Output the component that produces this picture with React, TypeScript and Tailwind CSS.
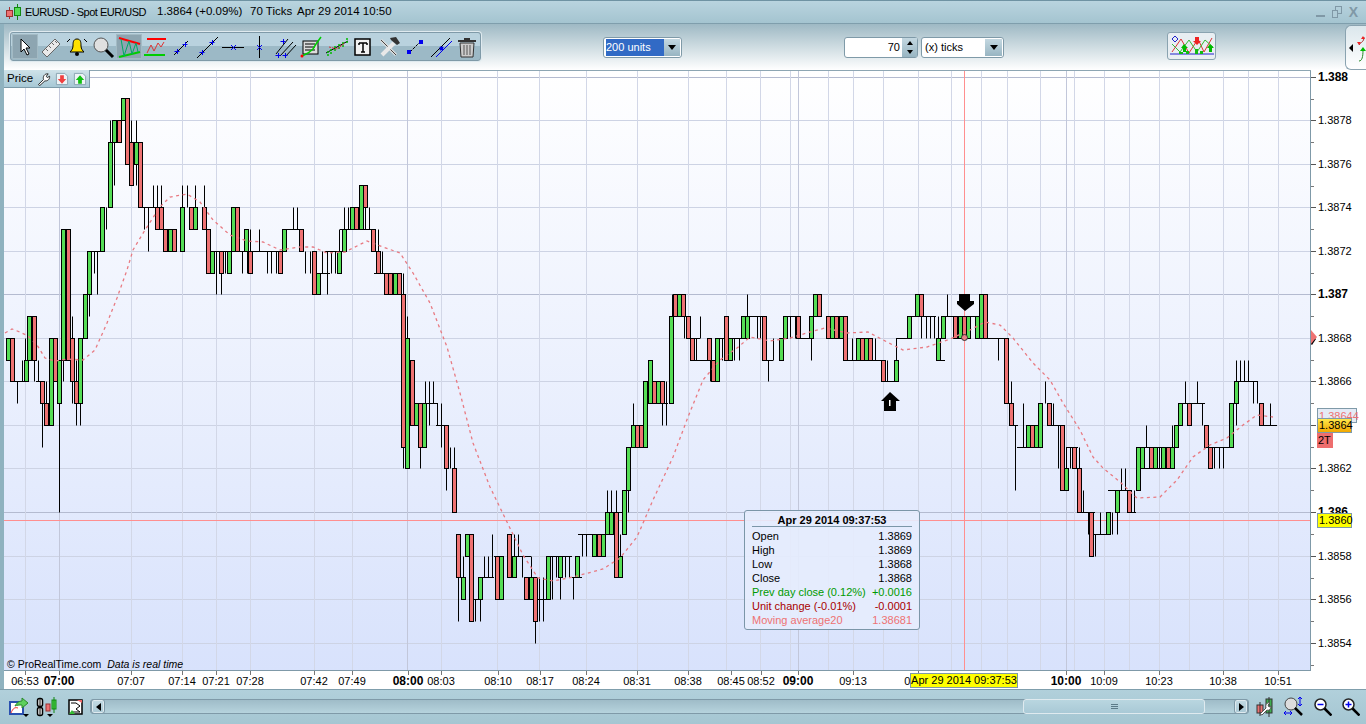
import React from 'react';

// price level (1.38xx) to page y
const ly = (n: number) => Math.round(512 - (n - 60) * 21.77) + 0.5;

type Body = [number, number, number, 'g' | 'r'];

const bodies: Body[] = [
  [8, 68, 67, 'g'], [12, 68, 66, 'r'], [26, 67, 66, 'g'], [29, 69, 67, 'g'], [34, 69, 67, 'r'], [42, 66, 65, 'r'], [46, 65, 64, 'r'],
  [51, 68, 64, 'g'], [55, 68, 66, 'r'], [59, 67, 65, 'g'], [63, 73, 67, 'g'], [68, 73, 67, 'r'], [72, 68, 66, 'r'], [76, 66, 65, 'r'],
  [80, 68, 65, 'g'], [85, 70, 68, 'g'], [89, 72, 70, 'g'], [102, 74, 72, 'g'], [110, 77, 74, 'g'], [114, 78, 77, 'g'], [119, 78, 77, 'r'],
  [123, 79, 78, 'g'], [127, 79, 76, 'r'], [131, 77, 75, 'r'], [136, 77, 76, 'g'], [140, 77, 74, 'r'], [157, 74, 73, 'r'], [161, 74, 73, 'r'],
  [165, 73, 72, 'r'], [170, 73, 72, 'g'], [174, 73, 72, 'r'], [182, 74, 72, 'g'], [191, 74, 73, 'r'], [195, 74, 73, 'g'], [204, 74, 73, 'r'],
  [208, 73, 71, 'r'], [212, 72, 71, 'g'], [221, 72, 71, 'r'], [229, 72, 71, 'g'], [233, 74, 72, 'g'], [237, 74, 72, 'r'], [246, 73, 72, 'g'],
  [250, 72, 71, 'r'], [280, 72, 71, 'r'], [284, 73, 72, 'g'], [301, 73, 72, 'r'], [314, 72, 70, 'r'], [318, 71, 70, 'g'], [339, 72, 71, 'g'],
  [344, 73, 72, 'g'], [352, 74, 73, 'g'], [356, 74, 73, 'r'], [361, 75, 73, 'g'], [365, 75, 74, 'r'], [373, 73, 72, 'r'], [378, 72, 71, 'r'],
  [386, 71, 70, 'r'], [390, 71, 70, 'r'], [395, 71, 70, 'g'], [399, 71, 70, 'r'], [403, 70, 63, 'r'], [407, 68, 62, 'g'], [412, 67, 64, 'r'],
  [416, 65, 64, 'g'], [420, 65, 63, 'r'], [424, 65, 63, 'g'], [446, 64, 62, 'r'], [454, 62, 60, 'r'],
  [458, 59, 57, 'r'], [463, 57, 56, 'g'], [467, 59, 58, 'g'], [471, 59, 55, 'r'], [480, 57, 56, 'g'], [497, 58, 56, 'r'], [501, 58, 56, 'g'],
  [509, 59, 57, 'r'], [514, 58, 57, 'g'], [526, 57, 56, 'r'], [531, 57, 56, 'g'], [535, 57, 55, 'r'], [548, 58, 56, 'g'], [560, 58, 57, 'g'],
  [577, 58, 57, 'g'], [594, 59, 58, 'g'], [599, 59, 58, 'r'], [603, 59, 58, 'g'], [607, 60, 59, 'g'], [611, 60, 59, 'g'], [616, 60, 57, 'r'],
  [620, 58, 57, 'g'], [624, 61, 59, 'g'], [628, 63, 61, 'g'], [633, 64, 63, 'g'], [637, 64, 63, 'r'], [641, 64, 63, 'r'], [645, 66, 63, 'g'],
  [650, 67, 65, 'g'], [654, 66, 65, 'r'], [658, 66, 65, 'g'], [662, 66, 65, 'r'], [671, 69, 65, 'g'], [675, 70, 69, 'r'], [679, 70, 69, 'g'],
  [683, 70, 69, 'r'], [688, 69, 68, 'r'], [692, 68, 67, 'r'], [709, 68, 67, 'r'], [713, 67, 66, 'r'], [717, 68, 66, 'g'], [726, 69, 67, 'r'],
  [730, 68, 67, 'g'], [743, 69, 68, 'g'], [747, 69, 68, 'g'], [764, 69, 67, 'r'], [781, 68, 67, 'g'], [785, 69, 68, 'g'], [798, 69, 68, 'r'],
  [811, 69, 68, 'g'], [815, 70, 69, 'g'], [819, 70, 69, 'r'], [828, 69, 68, 'r'], [832, 69, 68, 'g'], [836, 69, 68, 'r'], [841, 69, 68, 'g'],
  [845, 69, 67, 'r'], [858, 68, 67, 'g'], [862, 68, 67, 'r'], [866, 68, 67, 'g'], [870, 68, 67, 'r'], [883, 67, 66, 'r'], [896, 67, 66, 'g'],
  [909, 69, 68, 'g'], [917, 70, 69, 'g'], [921, 70, 69, 'r'], [938, 68, 67, 'g'], [943, 69, 68, 'g'], [955, 69, 68, 'r'], [960, 69, 68, 'g'],
  [964, 69, 68, 'r'], [968, 69, 68, 'g'], [977, 69, 68, 'g'], [981, 70, 68, 'g'], [985, 70, 68, 'r'],
  [1006, 68, 65, 'r'], [1011, 65, 64, 'r'], [1028, 64, 63, 'g'], [1032, 64, 63, 'r'], [1036, 64, 63, 'g'], [1040, 65, 63, 'g'], [1049, 65, 64, 'r'],
  [1062, 64, 61, 'r'], [1066, 62, 61, 'g'], [1074, 63, 62, 'r'], [1079, 62, 60, 'r'], [1091, 60, 58, 'r'], [1108, 60, 59, 'g'], [1117, 61, 60, 'g'],
  [1129, 61, 60, 'r'], [1138, 63, 61, 'g'], [1142, 63, 62, 'g'], [1151, 63, 62, 'r'], [1155, 63, 62, 'g'], [1163, 63, 62, 'g'], [1168, 63, 62, 'r'],
  [1172, 63, 62, 'g'], [1176, 64, 63, 'g'], [1180, 65, 64, 'g'], [1189, 65, 64, 'r'], [1206, 64, 63, 'r'], [1210, 63, 62, 'r'], [1231, 65, 63, 'g'],
  [1236, 66, 65, 'g'], [1261, 65, 64, 'r'],
];

const wicks: [number, number, number][] = [
  [17, 66, 65], [22, 67, 66], [25, 68, 67], [34, 67, 66], [38, 67, 66], [42, 65, 63], [46, 66, 65], [59, 65, 60], [63, 67, 66], [72, 69, 68], [72, 66, 65],
  [76, 67, 66], [76, 65, 64], [80, 65, 64], [89, 70, 69], [94, 72, 71], [97, 72, 70], [106, 74, 73], [110, 78, 77], [114, 77, 75], [131, 77, 78], [136, 78, 77],
  [136, 76, 75], [144, 74, 73], [148, 74, 72], [153, 75, 74], [157, 75, 74], [161, 75, 74], [182, 75, 74], [187, 75, 74], [195, 75, 74], [204, 75, 74],
  [216, 72, 70], [221, 71, 70], [225, 72, 71], [242, 72, 71], [247, 72, 71], [250, 73, 72], [259, 73, 72], [267, 72, 71], [271, 72, 71], [276, 72, 71],
  [293, 74, 73], [297, 74, 73], [305, 72, 71], [310, 72, 71], [322, 72, 71], [327, 72, 70], [331, 72, 71], [335, 72, 71], [339, 73, 72], [344, 74, 73],
  [348, 74, 73], [365, 74, 73], [369, 74, 73], [378, 73, 72], [382, 72, 71], [403, 71, 70], [403, 63, 62], [407, 69, 68], [416, 65, 64], [420, 63, 62],
  [425, 66, 65], [429, 66, 64], [433, 66, 65], [437, 65, 64], [441, 65, 63], [446, 62, 61], [450, 63, 62], [454, 63, 62],
  [458, 57, 55], [463, 58, 57], [475, 56, 55], [480, 56, 55], [484, 58, 57], [488, 58, 57], [492, 59, 57], [514, 59, 58], [518, 59, 58], [522, 58, 57],
  [531, 58, 57], [535, 55, 54], [539, 57, 55], [543, 57, 55], [552, 58, 56], [556, 58, 57], [560, 57, 56], [565, 58, 57], [569, 58, 57], [573, 57, 56],
  [582, 59, 58], [586, 59, 58], [607, 60, 61], [611, 61, 60], [616, 61, 60], [620, 59, 58], [628, 61, 60], [633, 65, 64], [662, 65, 64], [666, 66, 64],
  [672, 70, 69], [684, 69, 68], [696, 68, 67], [700, 69, 68], [710, 67, 66], [722, 68, 67], [734, 68, 67], [739, 68, 67], [747, 70, 69], [757, 69, 68],
  [760, 69, 68], [768, 67, 66], [773, 68, 67], [790, 69, 68], [795, 69, 68], [811, 68, 67], [852, 68, 67], [875, 68, 67], [887, 67, 66], [896, 68, 67],
  [921, 69, 68], [926, 69, 68], [930, 69, 68], [934, 69, 68], [938, 69, 68], [947, 70, 69], [998, 68, 67], [1011, 66, 65], [1015, 64, 61],
  [1023, 65, 63], [1040, 64, 63], [1045, 66, 65], [1053, 65, 64], [1058, 64, 62], [1066, 63, 62], [1070, 63, 62], [1079, 63, 62], [1083, 61, 60], [1088, 60, 59],
  [1095, 59, 58], [1100, 60, 59], [1112, 60, 59], [1117, 60, 59], [1121, 62, 61], [1125, 62, 61], [1134, 61, 60], [1146, 64, 63], [1159, 63, 62], [1172, 64, 63],
  [1185, 66, 65], [1197, 66, 65], [1202, 65, 64], [1214, 63, 62], [1219, 63, 62], [1223, 63, 62], [1236, 67, 66], [1236, 65, 64], [1240, 67, 66], [1244, 67, 66],
  [1248, 67, 66], [1253, 66, 65], [1257, 66, 65], [1270, 65, 64],
];

const dojis: [number, number, number][] = [
  [10, 28, 66], [36, 44, 66], [89, 100, 72], [140, 163, 74], [212, 232, 72], [238, 284, 72], [284, 303, 73], [318, 330, 71], [325, 344, 72], [340, 366, 73],
  [365, 375, 73], [374, 388, 71], [416, 438, 65], [436, 447, 64], [471, 482, 56], [481, 494, 57], [494, 501, 58], [509, 531, 58], [536, 548, 56], [548, 572, 58],
  [572, 582, 57], [578, 595, 59], [616, 622, 60], [660, 668, 65], [688, 700, 68], [692, 712, 67], [717, 744, 68], [743, 765, 69], [764, 773, 67], [785, 800, 69],
  [798, 812, 68], [845, 886, 67], [883, 898, 66], [896, 909, 68], [909, 936, 69], [936, 945, 67], [943, 985, 69], [985, 1006, 68], [1011, 1018, 64], [1017, 1040, 63],
  [1049, 1064, 64], [1066, 1078, 63], [1079, 1095, 60], [1091, 1108, 59], [1108, 1130, 61], [1129, 1136, 60], [1142, 1178, 63], [1138, 1172, 62], [1180, 1205, 65],
  [1206, 1232, 63], [1236, 1258, 66], [1261, 1277, 64],
];

const ma: [number, number][] = [
  [5, 333], [12, 329], [20, 332], [28, 336], [37, 345], [45, 358], [55, 361], [67, 359], [83, 360], [95, 350], [107, 323], [117, 298], [127, 270], [133, 250],
  [145, 230], [160, 207], [170, 197], [187, 194], [200, 202], [213, 220], [230, 235], [247, 241], [263, 242], [280, 250], [300, 247], [313, 247], [327, 253],
  [345, 252], [367, 241], [383, 247], [400, 253], [413, 273], [430, 303], [447, 347], [460, 393], [473, 443], [490, 487], [507, 522], [523, 555], [538, 578],
  [553, 581], [573, 577], [603, 569], [620, 558], [637, 537], [653, 500], [673, 457], [688, 417], [703, 380], [720, 360], [737, 348], [750, 337], [770, 341],
  [790, 338], [810, 332], [825, 328], [847, 333], [868, 332], [887, 342], [903, 350], [927, 347], [950, 339], [970, 330], [985, 322], [1000, 325], [1013, 338],
  [1033, 363], [1050, 380], [1063, 403], [1080, 430], [1093, 457], [1103, 468], [1120, 482], [1137, 498], [1160, 497], [1177, 480], [1193, 457], [1210, 445],
  [1227, 438], [1243, 425], [1257, 415], [1273, 417],
];

const minorX = [25, 131, 182, 216, 250, 314, 352, 441, 497, 539, 586, 637, 688, 726, 760, 790, 828, 853, 883, 918, 951, 981, 1007, 1040, 1074, 1104, 1129, 1159, 1189, 1223, 1248, 1278];
const majorX = [59, 407, 798, 1066];

const timeLabels: [number, string, boolean][] = [
  [25, '06:53', false], [59, '07:00', true], [131, '07:07', false], [182, '07:14', false], [216, '07:21', false], [250, '07:28', false], [314, '07:42', false],
  [352, '07:49', false], [408, '08:00', true], [441, '08:03', false], [498, '08:10', false], [540, '08:17', false], [586, '08:24', false], [637, '08:31', false],
  [688, '08:38', false], [731, '08:45', false], [761, '08:52', false], [798, '09:00', true], [853, '09:13', false], [918, '09:30', false], [1066, '10:00', true],
  [1104, '10:09', false], [1159, '10:23', false], [1223, '10:38', false], [1278, '10:51', false],
];

const priceLabels: [number, string, boolean][] = [
  [80, '1.388', true], [78, '1.3878', false], [76, '1.3876', false], [74, '1.3874', false], [72, '1.3872', false], [70, '1.387', true], [68, '1.3868', false],
  [66, '1.3866', false], [64, '1.3864', false], [62, '1.3862', false], [60, '1.386', true], [58, '1.3858', false], [56, '1.3856', false], [54, '1.3854', false],
];

function Chart() {
  return (
    <svg width="1366" height="619" viewBox="0 70 1366 619" className="block" fontFamily="'Liberation Sans', sans-serif">
      <defs>
        <linearGradient id="plotBg" x1="0" y1="0" x2="0" y2="1">
          <stop offset="0" stopColor="#ffffff" />
          <stop offset="1" stopColor="#d8e2fc" />
        </linearGradient>
      </defs>
      <rect x="4" y="70" width="1362" height="619" fill="#ffffff" />
      <rect x="4" y="70" width="1306" height="600" fill="url(#plotBg)" />
      {priceLabels.map(([n, , bold]) => (
        <line key={n} x1="4" x2="1310" y1={ly(n)} y2={ly(n)} stroke={bold ? '#b4bbd0' : '#cdd3e4'} strokeWidth="1" />
      ))}
      {minorX.map((x) => (
        <line key={x} x1={x + 0.5} x2={x + 0.5} y1="70" y2="670" stroke="#d2d7e7" />
      ))}
      {majorX.map((x) => (
        <line key={x} x1={x + 0.5} x2={x + 0.5} y1="70" y2="670" stroke="#c2c7da" />
      ))}
      <line x1="4" x2="1310" y1="520.5" y2="520.5" stroke="#ff8f8f" />
      <line x1="964.5" x2="964.5" y1="70" y2="670" stroke="#ff8f8f" />

      {dojis.map(([a, b, n], i) => (
        <line key={i} x1={a} x2={b} y1={ly(n)} y2={ly(n)} stroke="#000" />
      ))}
      {wicks.map(([x, a, b], i) => (
        <line key={i} x1={x + 0.5} x2={x + 0.5} y1={ly(a)} y2={ly(b)} stroke="#000" />
      ))}
      {bodies.map(([x, a, b, c], i) => (
        <rect key={i} x={x - 1.5} y={ly(a)} width="4" height={ly(b) - ly(a)} fill={c === 'g' ? '#55dd55' : '#ee7272'} stroke="#000" />
      ))}
      <polyline points={ma.map((p) => p.join(',')).join(' ')} fill="none" stroke="#e87a82" strokeWidth="1.3" strokeDasharray="3 3.5" />

      {/* buy / sell arrows */}
      <path d="M890 392l10 9h-4v10h-12v-10h-3z" fill="#000" />
      <rect x="889" y="400" width="1.5" height="6" fill="#fff" />
      <path d="M965 311l9-7v-3h-4v-7h-11v7h-2v3z" fill="#000" />
      <circle cx="964.5" cy="337.5" r="3" fill="#e98086" stroke="#333" />

      {/* frame and axes */}
      <line x1="1310.5" x2="1310.5" y1="70" y2="671" stroke="#7f99a8" strokeWidth="1" />
      <line x1="4" x2="1311" y1="670.5" y2="670.5" stroke="#7f99a8" />
      <line x1="4" x2="1311" y1="70.5" y2="70.5" stroke="#8da6b3" />
      {priceLabels.map(([n, text, bold]) => {
        const y = ly(n);
        return (
          <g key={text}>
            <line x1="1311" x2="1316" y1={y} y2={y} stroke="#555" />
            <line x1="1311" x2="1314" y1={y + 22} y2={y + 22} stroke="#777" />
            <text x="1318" y={y + 3.5} fontSize={bold ? 12 : 11} fontWeight={bold ? 700 : 400} fill="#000">{text}</text>
          </g>
        );
      })}
      <path d="M1311 330l6 7-6 8z" fill="#ee7272" />
      <path d="M1311 344l4-5h1l-4 6z" fill="#000" />
      {timeLabels.map(([x, text, bold]) => (
        <g key={text}>
          <line x1={x + 0.5} x2={x + 0.5} y1="671" y2="675" stroke="#777" />
          <text x={x} y="685" textAnchor="middle" fontSize={bold ? 12 : 11} fontWeight={bold ? 700 : 400} fill="#000">{text}</text>
        </g>
      ))}
    </svg>
  );
}

function Cross({ x, y }: { x: number; y: number }) {
  return <path d={`M${x - 2.5} ${y + 0.5}h5M${x + 0.5} ${y - 2}v5`} stroke="#0000ee" strokeWidth="1" fill="none" />;
}

function Tool({ active, children }: { active?: boolean; children: React.ReactNode }) {
  return (
    <div className={`w-[26px] h-[25px] flex items-center justify-center ${active ? 'bg-[#8da5b1] border border-[#a3bac4]' : ''}`}>
      <svg width="24" height="24" viewBox="0 0 24 24" fill="none">{children}</svg>
    </div>
  );
}

function Toolbar() {
  return (
    <div className="ml-[10px] mt-[8px] h-[29px] w-[471px] pl-[1px] flex items-center rounded-[3px] border border-[#7f9aa8] bg-[linear-gradient(#b9d2de_0,#b9d2de_50%,#9cb9c6_50%,#9cb9c6_100%)] shadow-[0_0_0_1px_#dfeaef]">
      <Tool active><path d="M8 4l0 13 3-3 3 6 2-1-3-6 4 0z" fill="#fff" stroke="#000" /></Tool>
      <Tool>
        <path d="M3 17L16 4l5 5L8 22z" fill="#e9e9e9" stroke="#666" />
        <path d="M7 14l2 2M10 11l2 2M13 8l2 2M16 6l2 2" stroke="#666" />
      </Tool>
      <Tool>
        <path d="M12 4c-4 0-4 4-4 7s-2 5-3 6h14c-1-1-3-3-3-6s0-7-4-7z" fill="#ffe100" stroke="#000" />
        <circle cx="12" cy="19" r="2" fill="#000" />
        <path d="M5 4L2 7M19 4l3 3" stroke="#000" />
      </Tool>
      <Tool>
        <circle cx="10" cy="10" r="7" fill="#e0e0e0" stroke="#555" />
        <path d="M15 15l7 7" stroke="#000" strokeWidth="3" />
      </Tool>
      <Tool active>
        <path d="M2 3l21 6" stroke="#f00" strokeWidth="2" />
        <path d="M2 22l21-5" stroke="#0c0" strokeWidth="2" />
        <path d="M4 4l3 17M7 21l5-15M12 6l3 13M15 19l4-11M19 8l2 9" stroke="#0a6" />
      </Tool>
      <Tool>
        <path d="M4 4h19" stroke="#f00" strokeWidth="2" />
        <path d="M1 20h21" stroke="#0c0" strokeWidth="2" />
        <path d="M4 18l4-8 3 6 4-8 3 4 3-5" stroke="#d33" />
      </Tool>
      <Tool>
        <path d="M5 20L19 6" stroke="#000" />
        <Cross x={8} y={16} /><Cross x={16} y={9} />
      </Tool>
      <Tool>
        <path d="M2 23L23 2" stroke="#000" />
        <Cross x={7} y={17} /><Cross x={17} y={7} />
      </Tool>
      <Tool>
        <path d="M1 12.5h22" stroke="#000" />
        <path d="M10 10l5 5M15 10l-5 5" stroke="#00e" />
      </Tool>
      <Tool>
        <path d="M12.5 1v22" stroke="#000" />
        <path d="M10 10l5 5M15 10l-5 5" stroke="#00e" />
      </Tool>
      <Tool>
        <path d="M3 19L15 4M7 21L20 7M12 22L23 10" stroke="#000" />
        <Cross x={5} y={20} /><Cross x={12} y={20} /><Cross x={10} y={6} />
      </Tool>
      <Tool>
        <rect x="4" y="6" width="15" height="13" fill="#dcdcdc" stroke="#000" />
        <path d="M6 9h10M6 12h10M6 15h10" stroke="#000" />
        <path d="M3 21l6-3 5-4 3-5 5-7" stroke="#0c0" strokeWidth="1.5" />
        <circle cx="3" cy="21" r="1.5" fill="#f00" />
      </Tool>
      <Tool>
        <path d="M1 18L23 6" stroke="#000" />
        <path d="M3 21v-6M6 19v-6M10 16v-6M14 14V8M18 12V6M22 8V2" stroke="#0b0" strokeDasharray="2 1" strokeWidth="1.5" />
        <path d="M4 12l8 2 8-6" stroke="#d33" strokeDasharray="2 1" />
      </Tool>
      <Tool>
        <rect x="4" y="4" width="15" height="16" fill="#f2f2f2" stroke="#000" strokeWidth="1.5" />
        <path d="M8 8h8M12 8v9M10 17h4M8 8v2M16 8v2" stroke="#000" strokeWidth="1.5" />
      </Tool>
      <Tool>
        <path d="M4 5l15 15" stroke="#ddd" strokeWidth="3" />
        <path d="M4 5l15 15" stroke="#444" strokeWidth="1" />
        <path d="M5 20L17 8" stroke="#e8e8e8" strokeWidth="4" />
        <path d="M13 3l6-1 4 6-3 2-6-5z" fill="#333" />
      </Tool>
      <Tool>
        <path d="M7 17L17 7" stroke="#000" strokeDasharray="3 1" />
        <rect x="4" y="15" width="4" height="4" fill="#00e" />
        <rect x="16" y="5" width="4" height="4" fill="#00e" />
      </Tool>
      <Tool>
        <path d="M2 22L21 3" stroke="#000" />
        <path d="M7 22L23 6" stroke="#00e" />
        <path d="M11 12l3 3M14 12l-3 3" stroke="#00e" strokeWidth="2" />
      </Tool>
      <Tool>
        <path d="M5 8h14l-1 14H6z" fill="#ccc" stroke="#333" />
        <path d="M3 6h18M9 4h6" stroke="#333" strokeWidth="2" />
        <path d="M9 10v10M12 10v10M15 10v10" stroke="#555" />
      </Tool>
    </div>
  );
}

function DropArrow({ className }: { className: string }) {
  return (
    <div className={`flex items-center justify-center bg-[linear-gradient(#c4d8e1,#98b5c2)] ${className}`}>
      <div className="w-0 h-0 border-x-[4px] border-x-transparent border-t-[5px] border-t-black" />
    </div>
  );
}

function Tooltip() {
  const rows: [string, string, string][] = [
    ['Open', '1.3869', 'text-black'],
    ['High', '1.3869', 'text-black'],
    ['Low', '1.3868', 'text-black'],
    ['Close', '1.3868', 'text-black'],
    ['Prev day close (0.12%)', '+0.0016', 'text-[#009a00]'],
    ['Unit change (-0.01%)', '-0.0001', 'text-[#a80000]'],
    ['Moving average20', '1.38681', 'text-[#ee7272]'],
  ];
  return (
    <div className="absolute left-[744px] top-[440px] w-[176px] h-[120px] px-[7px] rounded-[3px] border border-[#7b96a8] bg-[#e6ecfd]/90 text-[11px] leading-[14px]">
      <div className="h-[16px] pt-[2px] border-b border-[#7b96a8] text-center font-bold">Apr 29 2014 09:37:53</div>
      <div className="pt-[2px]">
        {rows.map(([k, v, c]) => (
          <div key={k} className={`flex justify-between ${c}`}>
            <span>{k}</span>
            <span>{v}</span>
          </div>
        ))}
      </div>
    </div>
  );
}

export default function App() {
  return (
    <div className="relative w-[1366px] h-[724px] overflow-hidden flex flex-col bg-[#8fb2bf] font-['Liberation_Sans',sans-serif] text-black">
      {/* title bar */}
      <div className="h-[24px] shrink-0 flex items-center pl-[6px] border-t border-t-[#6f93a3] border-b border-b-[#7f9eac] bg-[linear-gradient(#b9d4df,#a4c4d0)] text-[11.5px] whitespace-nowrap">
        <svg width="16" height="16" viewBox="0 0 16 16" className="mr-[3px] shrink-0">
          <path d="M3.5 3v12" stroke="#a33" />
          <rect x="0.5" y="6.5" width="6" height="6" fill="#ee7272" stroke="#933" />
          <path d="M11.5 0v16" stroke="#181" />
          <rect x="8.5" y="3.5" width="6" height="8" fill="#55dd55" stroke="#181" />
        </svg>
        <span className="w-[132px] text-[11px] tracking-[-0.5px]">EURUSD - Spot EUR/USD</span>
        <span className="w-[93px]">1.3864 (+0.09%)</span>
        <span className="w-[47px]">70 Ticks</span>
        <span>Apr 29 2014 10:50</span>
        <div className="ml-auto mr-[8px] flex items-center gap-[7px] text-[#8098a6]">
          <div className="w-[9px] h-[2px] mt-[8px] bg-[#8098a6]" />
          <svg width="10" height="12" viewBox="0 0 10 12" fill="none" stroke="#8098a6">
            <rect x="3.5" y="0.5" width="6" height="7" />
            <rect x="0.5" y="4.5" width="5" height="7" fill="#b0ccd7" />
          </svg>
          <span className="text-[14px] leading-none font-bold">X</span>
        </div>
      </div>

      {/* toolbar */}
      <div className="relative h-[46px] shrink-0 ml-[4px] bg-[linear-gradient(#9eb9c4,#ffffff)]">
        <div className="-ml-[4px]"><Toolbar /></div>
      </div>

      {/* chart */}
      <div className="relative h-[619px] shrink-0">
        <Chart />
        <div className="absolute left-[4px] top-0 w-[86px] h-[18px] flex items-center pl-[3px] border-r border-b border-[#7c9aa8] bg-[linear-gradient(#cfe2e9,#a7c8d5)] text-[11.5px] leading-none">
          <span className="w-[30px]">Price</span>
          <svg width="14" height="14" viewBox="0 0 15 15">
            <path d="M1.5 13.5L7 8C6 5 8 1.5 12 2l-2 2.5L11 6l2.5-1.5C14 8 11 10 8.5 9.5L3 14.5z" fill="#fff" stroke="#222" />
          </svg>
          <svg width="14" height="14" viewBox="0 0 15 15" className="ml-[4px]">
            <path d="M1.5 1.5h9l3 3v9h-12z" fill="#eef3f6" stroke="#86a2b0" />
            <path d="M5.5 3.5h4v4h2.5l-4.5 5-4.5-5h2.5z" fill="#f04040" />
          </svg>
          <svg width="14" height="14" viewBox="0 0 15 15" className="ml-[4px]">
            <path d="M1.5 1.5h9l3 3v9h-12z" fill="#eef3f6" stroke="#86a2b0" />
            <path d="M5.5 12.5h4v-4h2.5l-4.5-5-4.5 5h2.5z" fill="#10c010" />
          </svg>
        </div>
        <div className="absolute left-[7px] top-[588px] text-[10.5px] leading-[12px] whitespace-nowrap">
          © ProRealTime.com <span className="italic ml-[3px]">Data is real time</span>
        </div>
        <Tooltip />
        <div className="absolute left-[1317px] top-[338px] w-[40px] h-[15px] border border-[#7f9aa8] bg-[#e4eaf5] text-[#ee7272] text-[11px] leading-[14px] pl-[1px]">1.38644</div>
        <div className="absolute left-[1317px] top-[348px] w-[35px] h-[15px] border border-[#7f9aa8] bg-[linear-gradient(#ffe84a,#f2a800)] text-[11px] leading-[13px] pl-[1px]">1.3864</div>
        <div className="absolute left-[1317px] top-[363px] w-[16px] h-[15px] bg-[#ee6e6e] text-[11px] leading-[15px] pl-[1px]">2T</div>
        <div className="absolute left-[1317px] top-[443px] w-[35px] h-[15px] border border-[#7f9aa8] bg-[#ffff00] text-[11px] leading-[13px] pl-[1px]">1.3860</div>
        <div className="absolute left-[910px] top-[603px] w-[108px] h-[15px] border border-[#7f9aa8] bg-[#ffff00] text-[11px] leading-[13px] text-center whitespace-nowrap">Apr 29 2014 09:37:53</div>
      </div>

      {/* bottom bar */}
      <div className="h-[35px] shrink-0 flex items-center pl-[9px] pb-[1px] border-t border-[#7f9eac] bg-[linear-gradient(#b1d0db,#a5c6d2)]">
        <svg width="20" height="20" viewBox="0 0 20 20" className="mr-[5px]">
          <rect x="1" y="5" width="13" height="12" fill="#fff" stroke="#2a50b0" strokeWidth="2" />
          <path d="M2 16c2-5 4-6 7-5" stroke="#e33" fill="none" />
          <path d="M6 9c2-4 5-5 7-5V1l6 5-6 5V8c-3 0-5 0-7 1z" fill="#5ed05e" stroke="#2a8a2a" />
          <path d="M14 17h6l-3 3z" fill="#000" />
        </svg>
        <svg width="24" height="20" viewBox="0 0 24 20" className="mr-[10px]">
          <rect x="3.5" y="1.5" width="5" height="8" rx="2" fill="#fff" stroke="#000" strokeWidth="1.5" />
          <rect x="3.5" y="10.5" width="5" height="8" rx="2" fill="#fff" stroke="#000" strokeWidth="1.5" />
          <path d="M6 1v18" stroke="#000" />
          <rect x="12" y="7" width="4" height="7" fill="#ee7272" stroke="#933" />
          <rect x="18" y="3" width="4" height="9" fill="#55dd55" stroke="#181" />
          <path d="M20 0v16" stroke="#181" />
          <path d="M13 17h6l-3 3z" fill="#000" />
        </svg>
        <svg width="15" height="16" viewBox="0 0 15 16" className="mr-[7px]">
          <rect x="1" y="1" width="13" height="14" fill="#fff" stroke="#000" strokeWidth="1.5" />
          <path d="M3 4h5l4 3-4 3 4 3H4" stroke="#000" fill="none" />
          <path d="M9 1h5v3z" fill="#e66" />
          <path d="M1 15l3-4 3 4z" fill="#3b3" />
        </svg>
        <div className="w-[1159px] h-[15px] flex items-center rounded-[3px] border border-[#7f9aa8] bg-[linear-gradient(#9fbcc8,#b6d3dd)]">
          <div className="w-[14px] h-[15px] flex items-center justify-center rounded-[3px] border border-[#7f9aa8] bg-[linear-gradient(#c4dbe4,#a9c8d4)] shadow-[inset_0_0_0_1px_#dfeaef]">
            <div className="w-0 h-0 border-y-[4px] border-y-transparent border-r-[5px] border-r-black" />
          </div>
          <div className="ml-[918px] w-[182px] h-[15px] flex items-center justify-center rounded-[3px] border border-[#dfeaef] bg-[linear-gradient(#b9d6e0,#a9c9d6)]">
            <svg width="7" height="6" viewBox="0 0 7 6" stroke="#5c7a88"><path d="M0 .5h7M0 2.5h7M0 4.5h7" /></svg>
          </div>
          <div className="ml-auto w-[14px] h-[15px] flex items-center justify-center rounded-[3px] border border-[#7f9aa8] bg-[linear-gradient(#c4dbe4,#a9c8d4)] shadow-[inset_0_0_0_1px_#dfeaef]">
            <div className="w-0 h-0 border-y-[4px] border-y-transparent border-l-[5px] border-l-black" />
          </div>
        </div>
        <svg width="18" height="20" viewBox="0 0 18 20" className="ml-[7px]">
          <rect x="1" y="8" width="6" height="8" fill="#ee7272" stroke="#333" />
          <rect x="10" y="2" width="6" height="14" fill="#3fae4f" stroke="#333" />
          <path d="M13 0v20M4 5v14" stroke="#333" />
          <path d="M4 17l6-6c-1-3 1-6 4-5l-2 2 1 2 2-1c0 3-2 5-4 4l-5 5z" fill="#fff" stroke="#555" />
        </svg>
        <svg width="20" height="20" viewBox="0 0 20 20" className="ml-[10px]">
          <circle cx="7" cy="7" r="6" fill="#ddd" stroke="#444" />
          <path d="M11 11l7 7" stroke="#000" strokeWidth="2.5" />
          <path d="M16 0v9M14 2l2-2 2 2M14 7l2 2 2-2M0 16h8M2 14l-2 2 2 2M6 14l2 2-2 2" stroke="#00e" fill="none" />
        </svg>
        <svg width="18" height="18" viewBox="0 0 18 18" className="ml-[10px]">
          <circle cx="6.5" cy="6.5" r="5.5" fill="#fff" stroke="#222" strokeWidth="1.5" />
          <path d="M3.5 6.5h6" stroke="#00e" strokeWidth="1.5" />
          <path d="M10.5 10.5l7 7" stroke="#000" strokeWidth="2.5" />
        </svg>
        <svg width="18" height="18" viewBox="0 0 18 18" className="ml-[10px]">
          <circle cx="6.5" cy="6.5" r="5.5" fill="#fff" stroke="#222" strokeWidth="1.5" />
          <path d="M3.5 6.5h6M6.5 3.5v6" stroke="#00e" strokeWidth="1.5" />
          <path d="M10.5 10.5l7 7" stroke="#000" strokeWidth="2.5" />
        </svg>
      </div>

      {/* toolbar controls over the gradient */}
      <div className="absolute left-[603px] top-[37px] w-[79px] h-[21px] flex items-center pl-[2px] pr-[1px] rounded-[3px] border border-[#7f9aa8] bg-white text-[11px]">
        <span className="w-[58px] h-[17px] leading-[17px] bg-[#316ac5] text-white">200 units</span>
        <DropArrow className="w-[16px] h-[17px]" />
      </div>
      <div className="absolute left-[844px] top-[37px] w-[74px] h-[21px] flex items-center justify-end rounded-[3px] border border-[#7f9aa8] bg-white text-[11px]">
        <span className="mr-[2px]">70</span>
        <div className="w-[15px] h-[19px] flex flex-col items-center justify-around bg-[linear-gradient(#c4d8e1,#98b5c2)]">
          <div className="w-0 h-0 border-x-[3px] border-x-transparent border-b-[4px] border-b-black" />
          <div className="w-0 h-0 border-x-[3px] border-x-transparent border-t-[4px] border-t-black" />
        </div>
      </div>
      <div className="absolute left-[921px] top-[37px] w-[83px] h-[21px] flex items-center justify-between pl-[3px] pr-[1px] rounded-[3px] border border-[#7f9aa8] bg-white text-[11px]">
        <span>(x) ticks</span>
        <DropArrow className="w-[17px] h-[17px]" />
      </div>
      <div className="absolute left-[1167px] top-[32px] w-[49px] h-[28px] flex items-center justify-center rounded-[3px] border border-[#8aa3b0] bg-[#e8eef2]">
        <svg width="45" height="24" viewBox="0 0 45 24" fill="none">
          <path d="M1 20h44" stroke="#22c" />
          <path d="M3 18L12 5l8 14 9-14 6 13 8-14" stroke="#d33" />
          <path d="M3 10l8 8 9-12 8 12 8-12 8 7" stroke="#3b3" />
          <path d="M6 2l3 3-3 3-3-3z" stroke="#22c" />
          <path d="M26 3h4v4h2l-4 4-4-4h2z" fill="#e22" />
          <path d="M15 10l4 4h-2v4h-3v-4h-2z" fill="#0b0" />
          <path d="M41 10l4 4h-2v4h-3v-4h-2z" fill="#0b0" />
          <path d="M10 18h4v2h-4zM17 17h3v3h-3zM26 15h3v5h-3zM31 17h3v3h-3z" fill="#1b1" />
        </svg>
      </div>
      <div className="absolute left-[1345px] top-[25px] w-[21px] h-[45px] flex items-center rounded-l-[6px] border border-r-0 border-[#8aa3b0] bg-[linear-gradient(#dbe7ec,#ffffff)]">
        <svg width="20" height="34" viewBox="0 0 20 34" fill="none">
          <path d="M7 13v8l-4-4z" fill="#000" />
          <path d="M13 14c2-3 5-3 5-8" stroke="#a33" />
          <path d="M13 14l-2-3h4z M17 5l-2 3h4z" fill="#e22" />
          <path d="M13 30c3 0 4-4 4-11" stroke="#282" />
          <path d="M17 16l-3 4h6z" fill="#0b0" />
        </svg>
      </div>
    </div>
  );
}
